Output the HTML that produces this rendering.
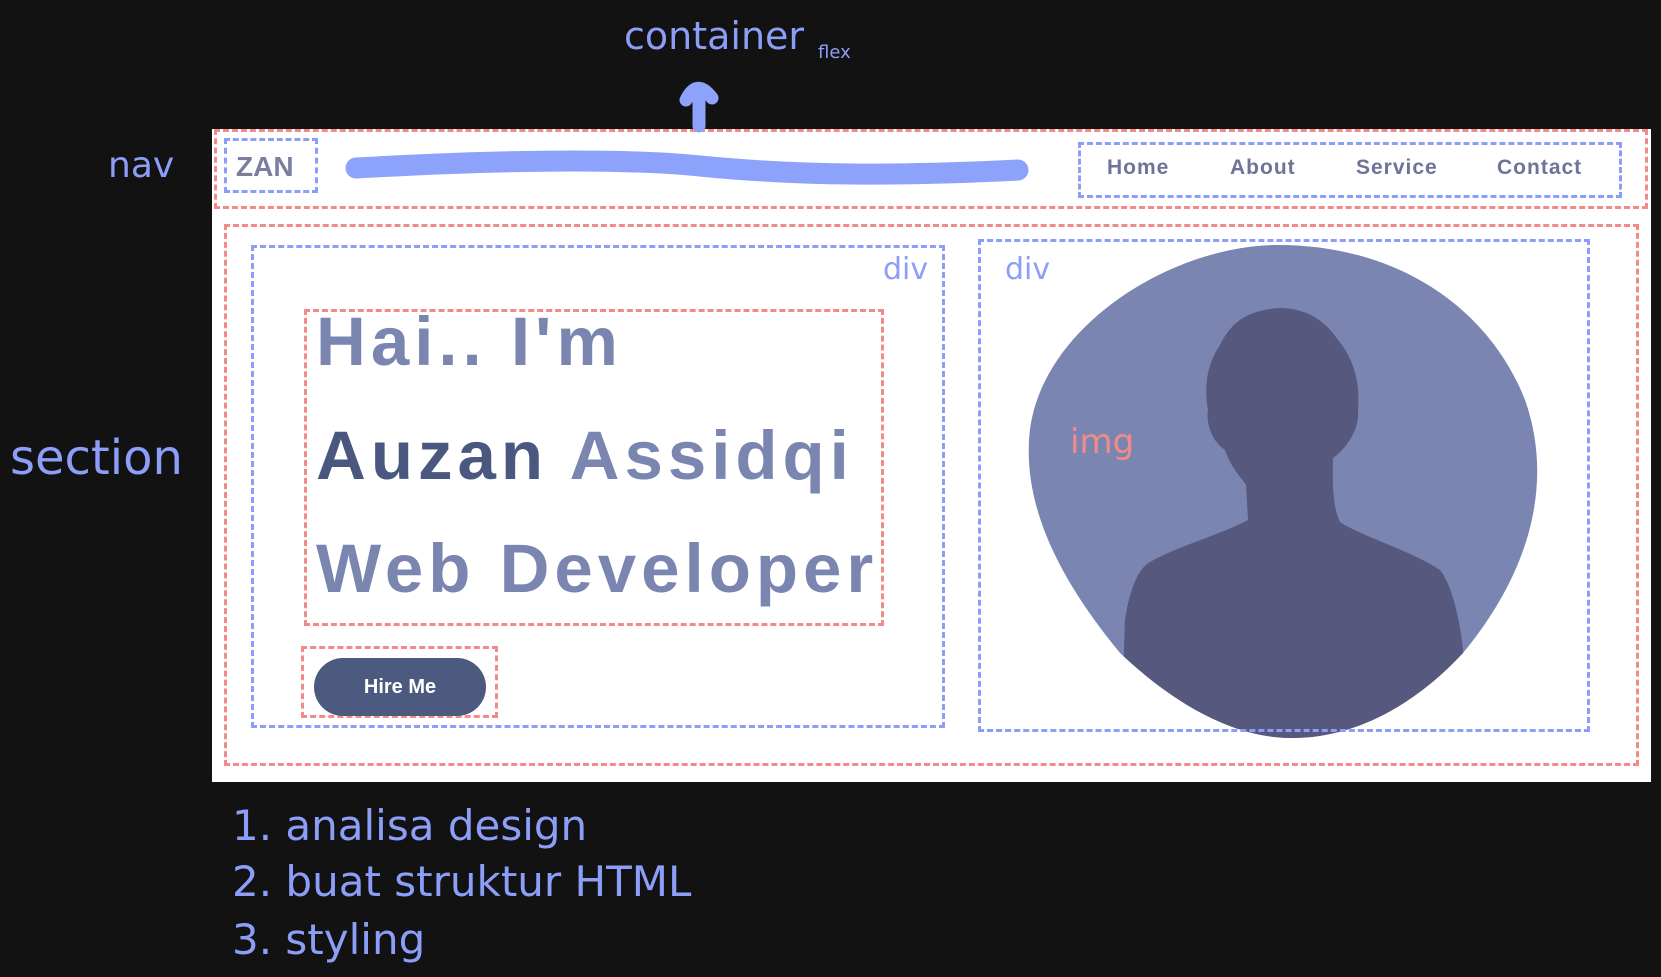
<!DOCTYPE html>
<html><head><meta charset="utf-8"><style>
body{margin:0;width:1661px;height:977px;background:#121212;position:relative;overflow:hidden;font-family:"Liberation Sans",sans-serif}
.a{position:absolute}
.r{position:absolute;border:3px dashed #f28b87;box-sizing:border-box}
.b{position:absolute;border:3px dashed #8c9ef8;box-sizing:border-box}
.hw{position:absolute;color:#8c9ef8;font-family:"DejaVu Sans",sans-serif;font-weight:normal;white-space:nowrap}
.nl{position:absolute;top:156px;font-size:21px;font-weight:bold;color:#6f7397;letter-spacing:1px}
.t{position:absolute;left:316px;font-size:69px;font-weight:bold;letter-spacing:5px;color:#7a85b0;white-space:nowrap;line-height:1}
</style></head><body>
<div class="a" style="left:212px;top:129px;width:1439px;height:653px;background:#fff"></div>
<div class="r" style="left:214px;top:129px;width:1434px;height:80px"></div>
<div class="b" style="left:224px;top:138px;width:94px;height:55px"></div>
<div class="a" style="left:236px;top:151px;font-size:28px;font-weight:bold;color:#7a7fa0">ZAN</div>
<svg class="a" style="left:0;top:0" width="1661" height="977">
<path d="M356,168 C500,160 620,158 700,166 C800,176 900,176 1018,170" stroke="#8da2fb" stroke-width="21" stroke-linecap="round" fill="none"/>
<path d="M699,126 L699,92 M686,100 C692,88 700,82 712,98" stroke="#8da2fb" stroke-width="13" stroke-linecap="round" fill="none"/>
</svg>
<div class="b" style="left:1078px;top:142px;width:544px;height:56px"></div>
<div class="nl" style="left:1107px">Home</div>
<div class="nl" style="left:1230px">About</div>
<div class="nl" style="left:1356px">Service</div>
<div class="nl" style="left:1497px">Contact</div>
<div class="r" style="left:224px;top:224px;width:1415px;height:542px"></div>
<div class="b" style="left:251px;top:245px;width:694px;height:483px"></div>
<div class="hw" style="left:883px;top:252px;font-size:30px">div</div>
<div class="r" style="left:304px;top:309px;width:580px;height:317px"></div>
<div class="t" style="top:307px">Hai.. I'm</div>
<div class="t" style="top:421px"><span style="color:#4a5880">Auzan</span> Assidqi</div>
<div class="t" style="top:534px">Web Developer</div>
<div class="r" style="left:301px;top:646px;width:197px;height:72px"></div>
<div class="a" style="left:314px;top:658px;width:172px;height:58px;border-radius:29px;background:#4d5a80;color:#fff;font-weight:bold;font-size:20px;text-align:center;line-height:58px">Hire Me</div>
<svg class="a" style="left:1020px;top:240px" width="540" height="500">
<defs><clipPath id="c"><path d="M258,5 C380,5 470,70 505,160 C530,230 520,320 443,413 C390,470 330,498 272,498 C210,498 150,460 100,413 C40,340 5,270 9,200 C15,90 150,5 258,5 Z"/></clipPath></defs>
<path d="M258,5 C380,5 470,70 505,160 C530,230 520,320 443,413 C390,470 330,498 272,498 C210,498 150,460 100,413 C40,340 5,270 9,200 C15,90 150,5 258,5 Z" fill="#7a86b1"/>
<path clip-path="url(#c)" d="M260,68 C230,70 212,80 200,105 C186,125 184,150 188,170 C186,180 190,200 205,210 C212,230 222,238 226,245 L228,280 C200,295 160,305 130,322 C115,330 108,360 105,380 L100,520 L450,520 L443,410 C440,380 432,345 420,330 C390,310 345,298 320,282 C314,270 312,250 313,218 C325,210 340,190 338,170 C340,145 335,120 318,100 C305,80 285,68 260,68 Z" fill="#57587d"/>
</svg>
<div class="b" style="left:978px;top:239px;width:612px;height:493px"></div>
<div class="hw" style="left:1005px;top:252px;font-size:30px">div</div>
<div class="hw" style="left:1070px;top:422px;font-size:34px;color:#f28b87">img</div>
<div class="hw" style="left:108px;top:145px;font-size:36px">nav</div>
<div class="hw" style="left:10px;top:430px;font-size:48px">section</div>
<div class="hw" style="left:624px;top:14px;font-size:38px">container</div>
<div class="hw" style="left:818px;top:42px;font-size:18px">flex</div>
<div class="hw" style="left:232px;top:801px;font-size:42px">1. analisa design</div>
<div class="hw" style="left:232px;top:857px;font-size:42px">2. buat struktur HTML</div>
<div class="hw" style="left:232px;top:915px;font-size:42px">3. styling</div>
</body></html>
